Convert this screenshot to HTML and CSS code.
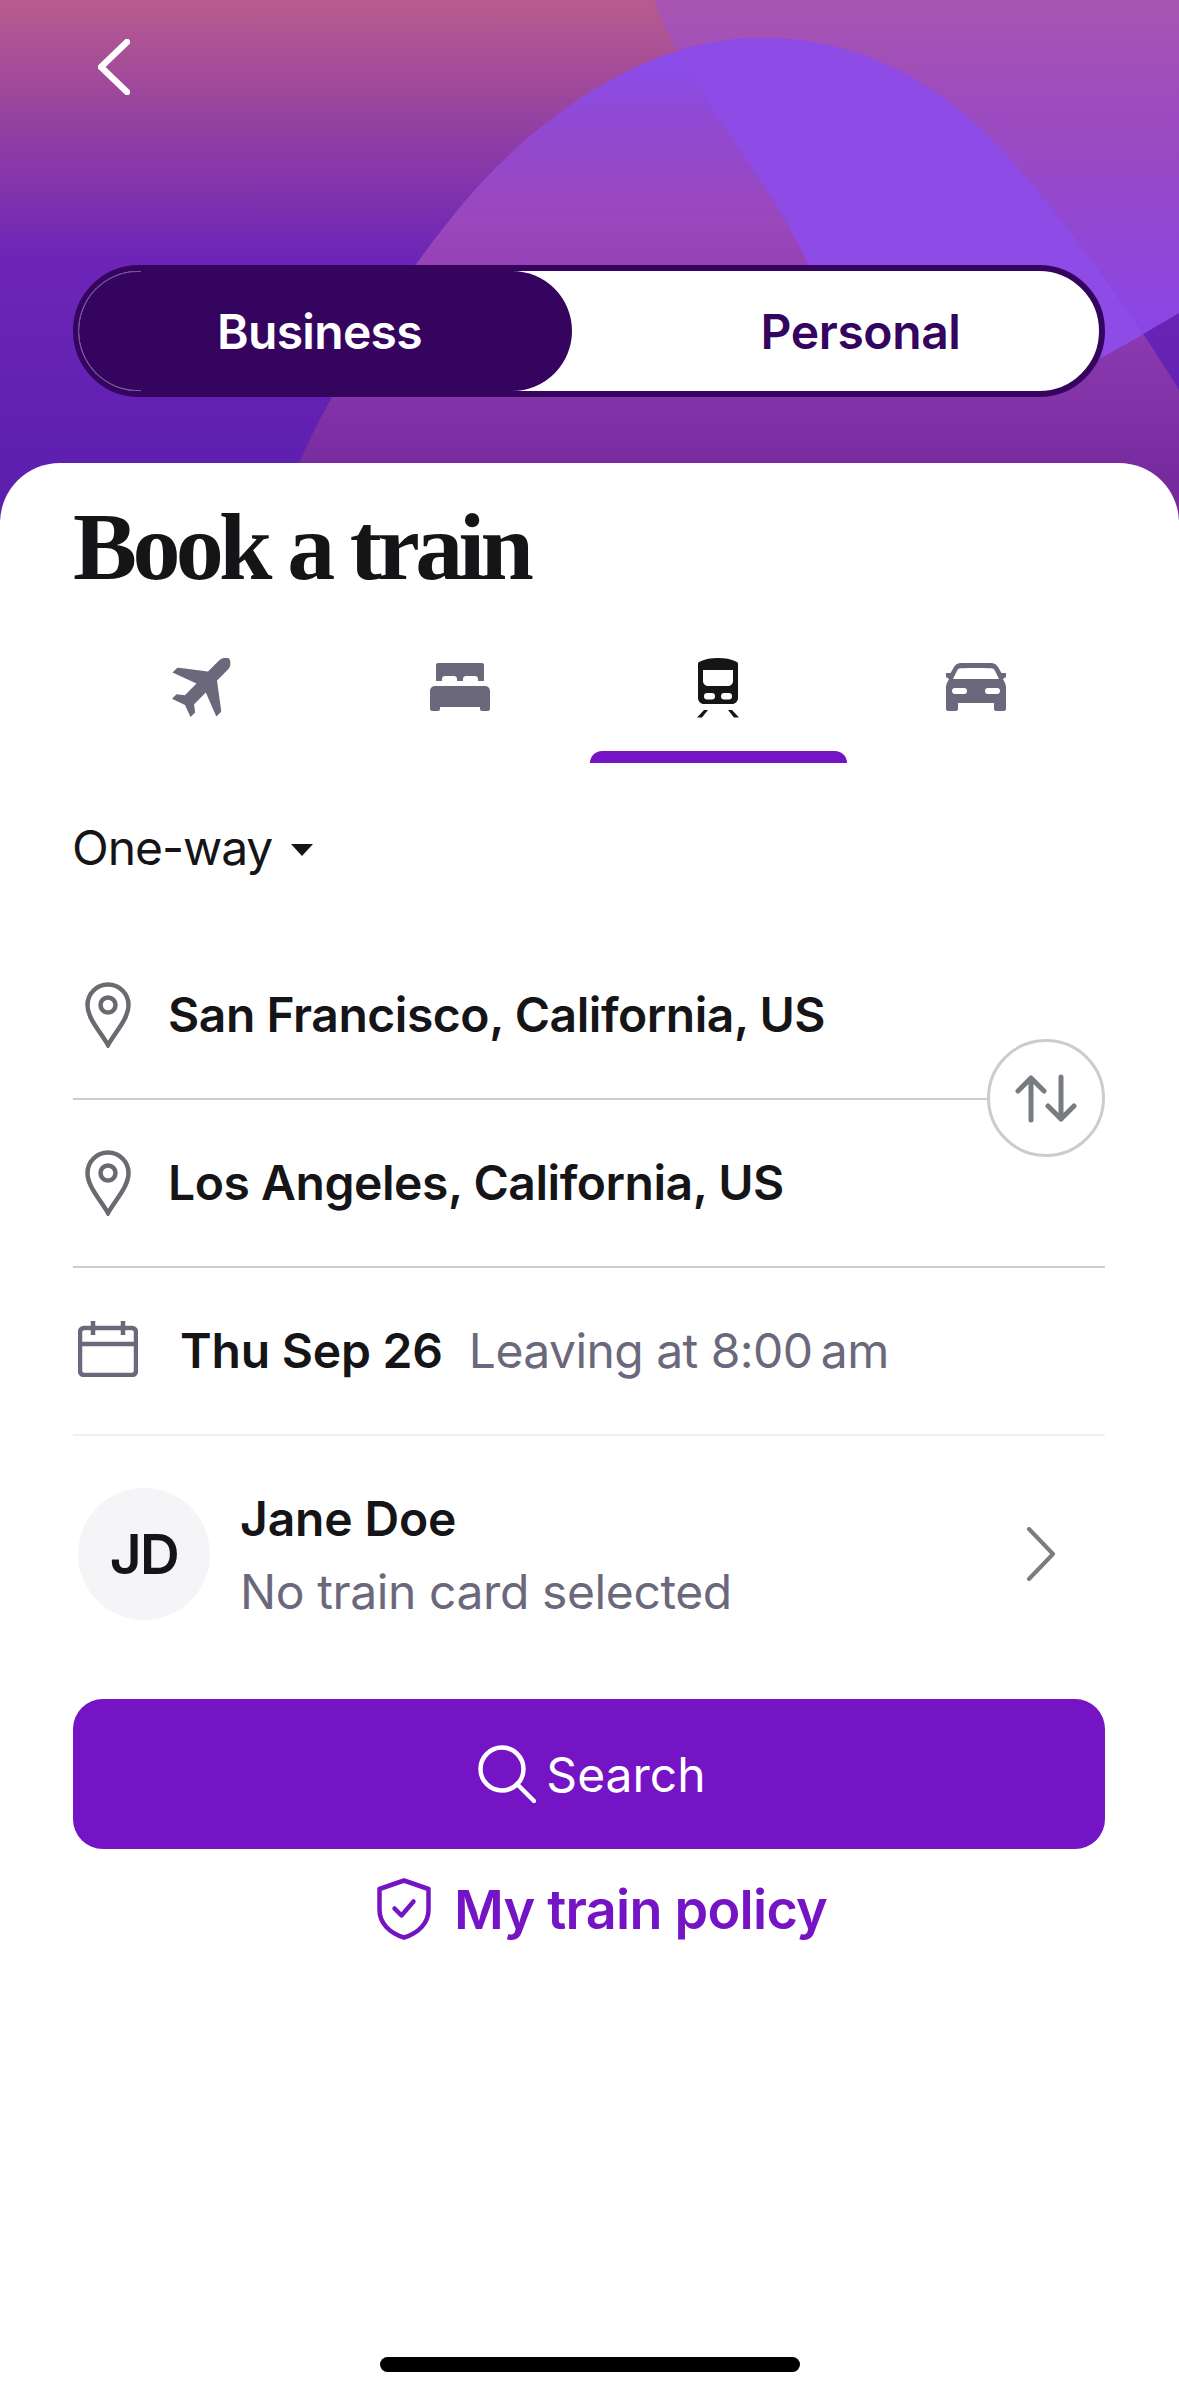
FILE: index.html
```html
<!DOCTYPE html>
<html lang="en">
<head>
<meta charset="utf-8">
<title>Book a train</title>
<link rel="stylesheet" href="styles.css">
</head>
<body>
<div class="page">
  <header class="hero">
    <svg class="hero-bg" viewBox="0 0 1179 520" preserveAspectRatio="none" aria-hidden="true">
      <defs>
        <linearGradient id="baseG" x1="0" y1="0" x2="0" y2="1">
          <stop offset="0" stop-color="#b95b8e"/>
          <stop offset=".27" stop-color="#8f3da4"/>
          <stop offset=".5" stop-color="#6d25b8"/>
          <stop offset="1" stop-color="#5a1eae"/>
        </linearGradient>
        <linearGradient id="humpG" gradientUnits="userSpaceOnUse" x1="0" y1="38" x2="0" y2="480">
          <stop offset="0" stop-color="#8a4df2"/>
          <stop offset=".2" stop-color="#9049d0"/>
          <stop offset=".42" stop-color="#9b47bc"/>
          <stop offset="1" stop-color="#762a9e"/>
        </linearGradient>
        <linearGradient id="outerG" gradientUnits="userSpaceOnUse" x1="0" y1="0" x2="0" y2="330">
          <stop offset="0" stop-color="#a855b3"/>
          <stop offset=".4" stop-color="#9a4ac0"/>
          <stop offset="1" stop-color="#8a45e6"/>
        </linearGradient>
        <clipPath id="rightClip">
          <path d="M654 0 C670 50 720 120 760 180 C800 240 830 300 850 385 L1040 385 C1080 372 1120 348 1179 313 L1179 0 Z"/>
        </clipPath>
      </defs>
      <rect width="1179" height="520" fill="url(#baseG)"/>
      <path d="M654 0 C670 50 720 120 760 180 C800 240 830 300 850 385 L1040 385 C1080 372 1120 348 1179 313 L1179 0 Z" fill="url(#outerG)"/>
      <path d="M299 463 C350 350 420 255 466 200 C530 125 640 38 760 38 C880 38 960 100 1020 170 C1080 240 1130 310 1179 390 L1179 520 L270 520 Z" fill="url(#humpG)"/>
      <g clip-path="url(#rightClip)">
        <path d="M299 463 C350 350 420 255 466 200 C530 125 640 38 760 38 C880 38 960 100 1020 170 C1080 240 1130 310 1179 390 L1179 520 L270 520 Z" fill="#8e4be6"/>
      </g>
    </svg>
    <button class="back" aria-label="Back">
      <svg width="32" height="56" viewBox="0 0 32 56"><path d="M29 3 L3 28 L29 53" class="back-path"/></svg>
    </button>
    <div class="toggle">
      <div class="seg seg-on">Business</div>
      <div class="seg seg-off">Personal</div>
    </div>
  </header>

  <main class="card">
    <h1 class="title">Book a train</h1>

    <nav class="tabs">
      <div class="tab tab-tall">
        <svg class="ico" width="60" height="60" viewBox="0 0 60 60"><path class="fill-grey" d="M57 1.500c-3-1.700-7.500-.5-10.500 2.500L36 14.500 6.800 10.800c-1-.1-1.800.2-2.500.9L.5 15.500l24 11L12.800 38.200 4.500 37.200 0 41.800l13 6.200 5.500 12 4.600-4.500-1-8.300 11.700-11.700 10.500 24 4-3.800c.7-.7 1-1.600.8-2.600L45 23.500 56 12.500c3-3 3-8.500 1-11z" transform="translate(0 -1)"/></svg>
      </div>
      <div class="tab">
        <svg class="ico" width="60" height="48" viewBox="0 0 60 48"><path class="fill-grey" d="M6 2c0-1.100.9-2 2-2h44c1.100 0 2 .9 2 2v16h-6v-2c0-1.700-1.300-3-3-3h-9c-1.700 0-3 1.300-3 3v2h-6v-2c0-1.700-1.300-3-3-3h-9c-1.700 0-3 1.300-3 3v2H6V2z"/><path class="fill-grey" d="M5 23h50c2.800 0 5 2.200 5 5v18c0 1.100-.9 2-2 2h-6c-1.100 0-2-.9-2-2v-2H10v2c0 1.100-.9 2-2 2H2c-1.100 0-2-.9-2-2V28c0-2.800 2.200-5 5-5z"/></svg>
      </div>
      <div class="tab tab-tall">
        <svg class="ico" width="44" height="60" viewBox="0 0 44 60"><path class="fill-ink" d="M4 3.500C9 1 15 0 22 0s13 1 18 3.500c1.300.6 2 1.200 2 2V40c0 3.300-2.700 6-6 6H8c-3.300 0-6-2.700-6-6V5.500c0-.8.700-1.400 2-2z"/><path class="fill-white" d="M7 12h30v11c0 2.800-2.200 5-5 5H12c-2.800 0-5-2.200-5-5V12z"/><rect class="fill-white" x="8" y="35" width="11" height="6.500" rx="3.250"/><rect class="fill-white" x="25" y="35" width="11" height="6.500" rx="3.250"/><path class="fill-ink" d="M8 52h4L6 59.500H1zM32 52h4l7 7.500h-5z"/></svg>
        <span class="tab-bar"></span>
      </div>
      <div class="tab">
        <svg class="ico" width="60" height="48" viewBox="0 0 60 48"><path class="fill-grey" fill-rule="evenodd" d="M15 0h30c3 0 5.500 1.300 7 4l3.500 6H60v4l-3 2 1.300 2.500C59.400 20.500 60 22.500 60 24.500V46c0 1.100-.9 2-2 2h-8c-1.100 0-2-.9-2-2v-6H12v6c0 1.100-.9 2-2 2H2c-1.100 0-2-.9-2-2V24.500c0-2 .6-4 1.700-6L3 16l-3-2v-4h4.500L8 4c1.500-2.700 4-4 7-4zM7 16h46l-4.300-8.700C48 6 47 5.500 45.500 5.300 36 4.800 24 4.800 14.500 5.300 13 5.500 12 6 11.300 7.300L7 16zM9 25c-2 0-3 1.300-3 3s1 3 3 3h9c2 0 3-1.300 3-3s-1-3-3-3H9zM42 25c-2 0-3 1.300-3 3s1 3 3 3h9c2 0 3-1.300 3-3s-1-3-3-3h-9z"/></svg>
      </div>
    </nav>

    <div class="trip">
      <span class="trip-label">One-way</span>
      <svg class="caret" width="22" height="12" viewBox="0 0 22 12"><path d="M0 0h22L11 12z"/></svg>
    </div>

    <section class="places">
      <div class="row row-place">
        <svg class="pin" width="46" height="66" viewBox="0 0 46 66"><path class="line-pin" d="M23 63 C14 48 2.500 36 2.500 23 a20.500 20.500 0 0 1 41 0 C43.500 36 32 48 23 63z"/><circle class="line-pin" cx="23" cy="23" r="7.500"/></svg>
        <span class="place">San Francisco, California, US</span>
      </div>
      <div class="row row-place">
        <svg class="pin" width="46" height="66" viewBox="0 0 46 66"><path class="line-pin" d="M23 63 C14 48 2.500 36 2.500 23 a20.500 20.500 0 0 1 41 0 C43.500 36 32 48 23 63z"/><circle class="line-pin" cx="23" cy="23" r="7.500"/></svg>
        <span class="place">Los Angeles, California, US</span>
      </div>
      <button class="swap" aria-label="Swap">
        <svg width="62" height="50" viewBox="0 0 62 50"><path class="line-swap" d="M16 47V5M3 18 16 5 29 18M46 4v42M33 33l13 13 13-13"/></svg>
      </button>
    </section>

    <div class="row row-date">
      <svg class="cal" width="60" height="56" viewBox="0 0 60 56"><path class="line-cal" d="M6 7h48a4 4 0 0 1 4 4v39a4 4 0 0 1-4 4H6a4 4 0 0 1-4-4V11a4 4 0 0 1 4-4zM2 23h56M15 0v14M45 0v14"/></svg>
      <span class="date">Thu Sep 26</span>
      <span class="time">Leaving at 8:00&#8201;am</span>
    </div>

    <div class="traveler">
      <div class="avatar">JD</div>
      <div class="who">
        <div class="name">Jane Doe</div>
        <div class="sub">No train card selected</div>
      </div>
      <svg class="chev" width="30" height="54" viewBox="0 0 30 54"><path d="M3 2 27 27 3 52"/></svg>
    </div>

    <button class="search">
      <svg class="search-ico" width="58" height="58" viewBox="0 0 58 58"><circle cx="24" cy="24" r="21.500"/><path d="M39 39 56 56"/></svg>
      <span>Search</span>
    </button>

    <a class="policy">
      <svg class="shield" width="54" height="62" viewBox="0 0 54 62"><path class="line-shield" d="M27 2.500 51.500 11v21c0 13-10 23-24.500 27.500C12.500 55 2.500 45 2.500 32V11z"/><path class="line-shield" d="M17.500 30.500l7 7 12-14"/></svg>
      <span>My train policy</span>
    </a>
  </main>

  <div class="home-bar"></div>
</div>
</body>
</html>
```

FILE: styles.css
```css
* { box-sizing: border-box; }
html, body { margin: 0; padding: 0; background: #fff; }
body { font-family: Inter, "Liberation Sans", sans-serif; color: #151518; }
.page { width: 1179px; height: 2396px; position: relative; overflow: hidden; background: #fff; }

.hero { position: relative; height: 520px; padding: 39px 74px 0 73px; }
.hero-bg { position: absolute; left: 0; top: 0; width: 1179px; height: 520px; display: block; }
.back { position: relative; display: block; margin: 0 0 0 25px; padding: 0; border: 0; background: none; height: 56px; width: 32px; }
.back svg { display: block; }
.back-path { fill: none; stroke: #fff; stroke-width: 6.500; stroke-linecap: round; stroke-linejoin: round; }

.toggle { position: relative; margin-top: 170px; height: 132px; border: 6px solid #35045f; border-radius: 66px; background: #fff; display: flex; font-size: 48px; font-weight: 600; letter-spacing: -0.7px; }
.seg { display: flex; align-items: center; justify-content: center; height: 100%; }
.seg-on { position: relative; width: 493px; background: #35045f; color: #fff; border-radius: 60px; padding-right: 12px; }
.seg-on::before { content: ""; position: absolute; left: -1px; top: 0; bottom: 0; width: 62px; border: 1px solid #7a5a9e; border-right: 0; border-radius: 60px 0 0 60px; }
.seg-off { flex: 1; color: #35045f; padding-left: 50px; letter-spacing: -0.4px; }

.card { position: absolute; left: 0; top: 463px; width: 1179px; height: 1933px; background: #fff; border-radius: 60px 60px 0 0; padding: 0 74px 0 73px; }
.title { margin: 32px 0 0; font-family: "Liberation Serif", serif; font-weight: 700; font-size: 96px; line-height: 104px; letter-spacing: -4.650px; color: #151518; }

.tabs { display: grid; grid-template-columns: repeat(4, 1fr); margin-top: 53px; height: 111px; }
.tab { position: relative; display: flex; justify-content: center; align-items: flex-start; padding-top: 11px; }
.tab-tall { padding-top: 6px; }
.tab-bar { position: absolute; left: 1px; right: 0; bottom: 0; height: 12px; background: #7514c4; border-radius: 12px 12px 0 0; }
.ico { display: block; }
.fill-grey { fill: #6b687c; }
.fill-ink { fill: #151518; }
.fill-white { fill: #fff; }

.trip { display: flex; align-items: center; gap: 19px; margin-top: 48px; height: 72px; margin-left: -1px; }
.trip-label { font-size: 48px; font-weight: 400; letter-spacing: -1.050px; }
.caret { fill: #151518; display: block; margin-top: 6px; }

.places { position: relative; margin-top: 49px; }
.row { display: flex; align-items: center; }
.row-place { height: 168px; border-bottom: 2px solid #cdcdd0; padding-left: 12px; gap: 37px; }
.pin { display: block; flex: none; }
.place { font-size: 48px; font-weight: 600; letter-spacing: -0.450px; margin-top: -2px; }
.line-pin { fill: none; stroke: #6a6a70; stroke-width: 4.500; }
.swap { position: absolute; right: 0; top: 107px; width: 118px; height: 118px; border-radius: 50%; border: 3px solid #cccccc; background: #fff; padding: 0; display: flex; align-items: center; justify-content: center; }
.line-swap { fill: none; stroke: #767c80; stroke-width: 5; stroke-linecap: round; stroke-linejoin: round; }

.row-date { height: 168px; border-bottom: 2px solid #f3eeee; padding: 0 0 4px 5px; }
.cal { display: block; flex: none; margin-right: 42px; }
.line-cal { fill: none; stroke: #6b687c; stroke-width: 4.500; stroke-linejoin: round; }
.date { font-size: 48px; font-weight: 600; letter-spacing: -0.200px; margin: 2px 26px 0 0; }
.time { font-size: 48px; font-weight: 400; letter-spacing: -0.550px; color: #6b687c; margin-top: 2px; }

.traveler { display: flex; align-items: center; height: 132px; margin-top: 52px; padding-left: 5px; }
.avatar { width: 132px; height: 132px; flex: none; border-radius: 50%; background: #f5f5f8; display: flex; align-items: center; justify-content: center; font-size: 55px; font-weight: 600; letter-spacing: -1.500px; }
.who { margin: 2px 0 0 30px; flex: 1; }
.name { font-size: 48px; font-weight: 600; letter-spacing: -0.150px; line-height: 60px; }
.sub { font-size: 48px; font-weight: 400; letter-spacing: -0.400px; line-height: 60px; margin-top: 13px; color: #6b687c; }
.chev { display: block; margin-right: 49px; }
.chev path { fill: none; stroke: #7b7b80; stroke-width: 4; stroke-linecap: round; stroke-linejoin: round; }

.search { display: flex; align-items: center; justify-content: center; gap: 10px; width: 1032px; height: 150px; margin-top: 79px; border: 0; border-radius: 30px; background: #7514c4; color: #fff; font-family: inherit; font-size: 48px; font-weight: 400; padding: 0 0 0 6px; }
.search-ico circle, .search-ico path { fill: none; stroke: #fff; stroke-width: 4.500; stroke-linecap: round; }

.policy { display: flex; align-items: center; justify-content: center; gap: 23px; margin-top: 29px; height: 62px; padding-left: 26px; color: #7514c4; font-size: 54px; font-weight: 600; letter-spacing: -0.750px; }
.shield { display: block; flex: none; }
.line-shield { fill: none; stroke: #7514c4; stroke-width: 4.500; stroke-linejoin: round; stroke-linecap: round; }

.home-bar { position: absolute; left: 380px; top: 2357px; width: 420px; height: 15px; border-radius: 8px; background: #000; }
```
